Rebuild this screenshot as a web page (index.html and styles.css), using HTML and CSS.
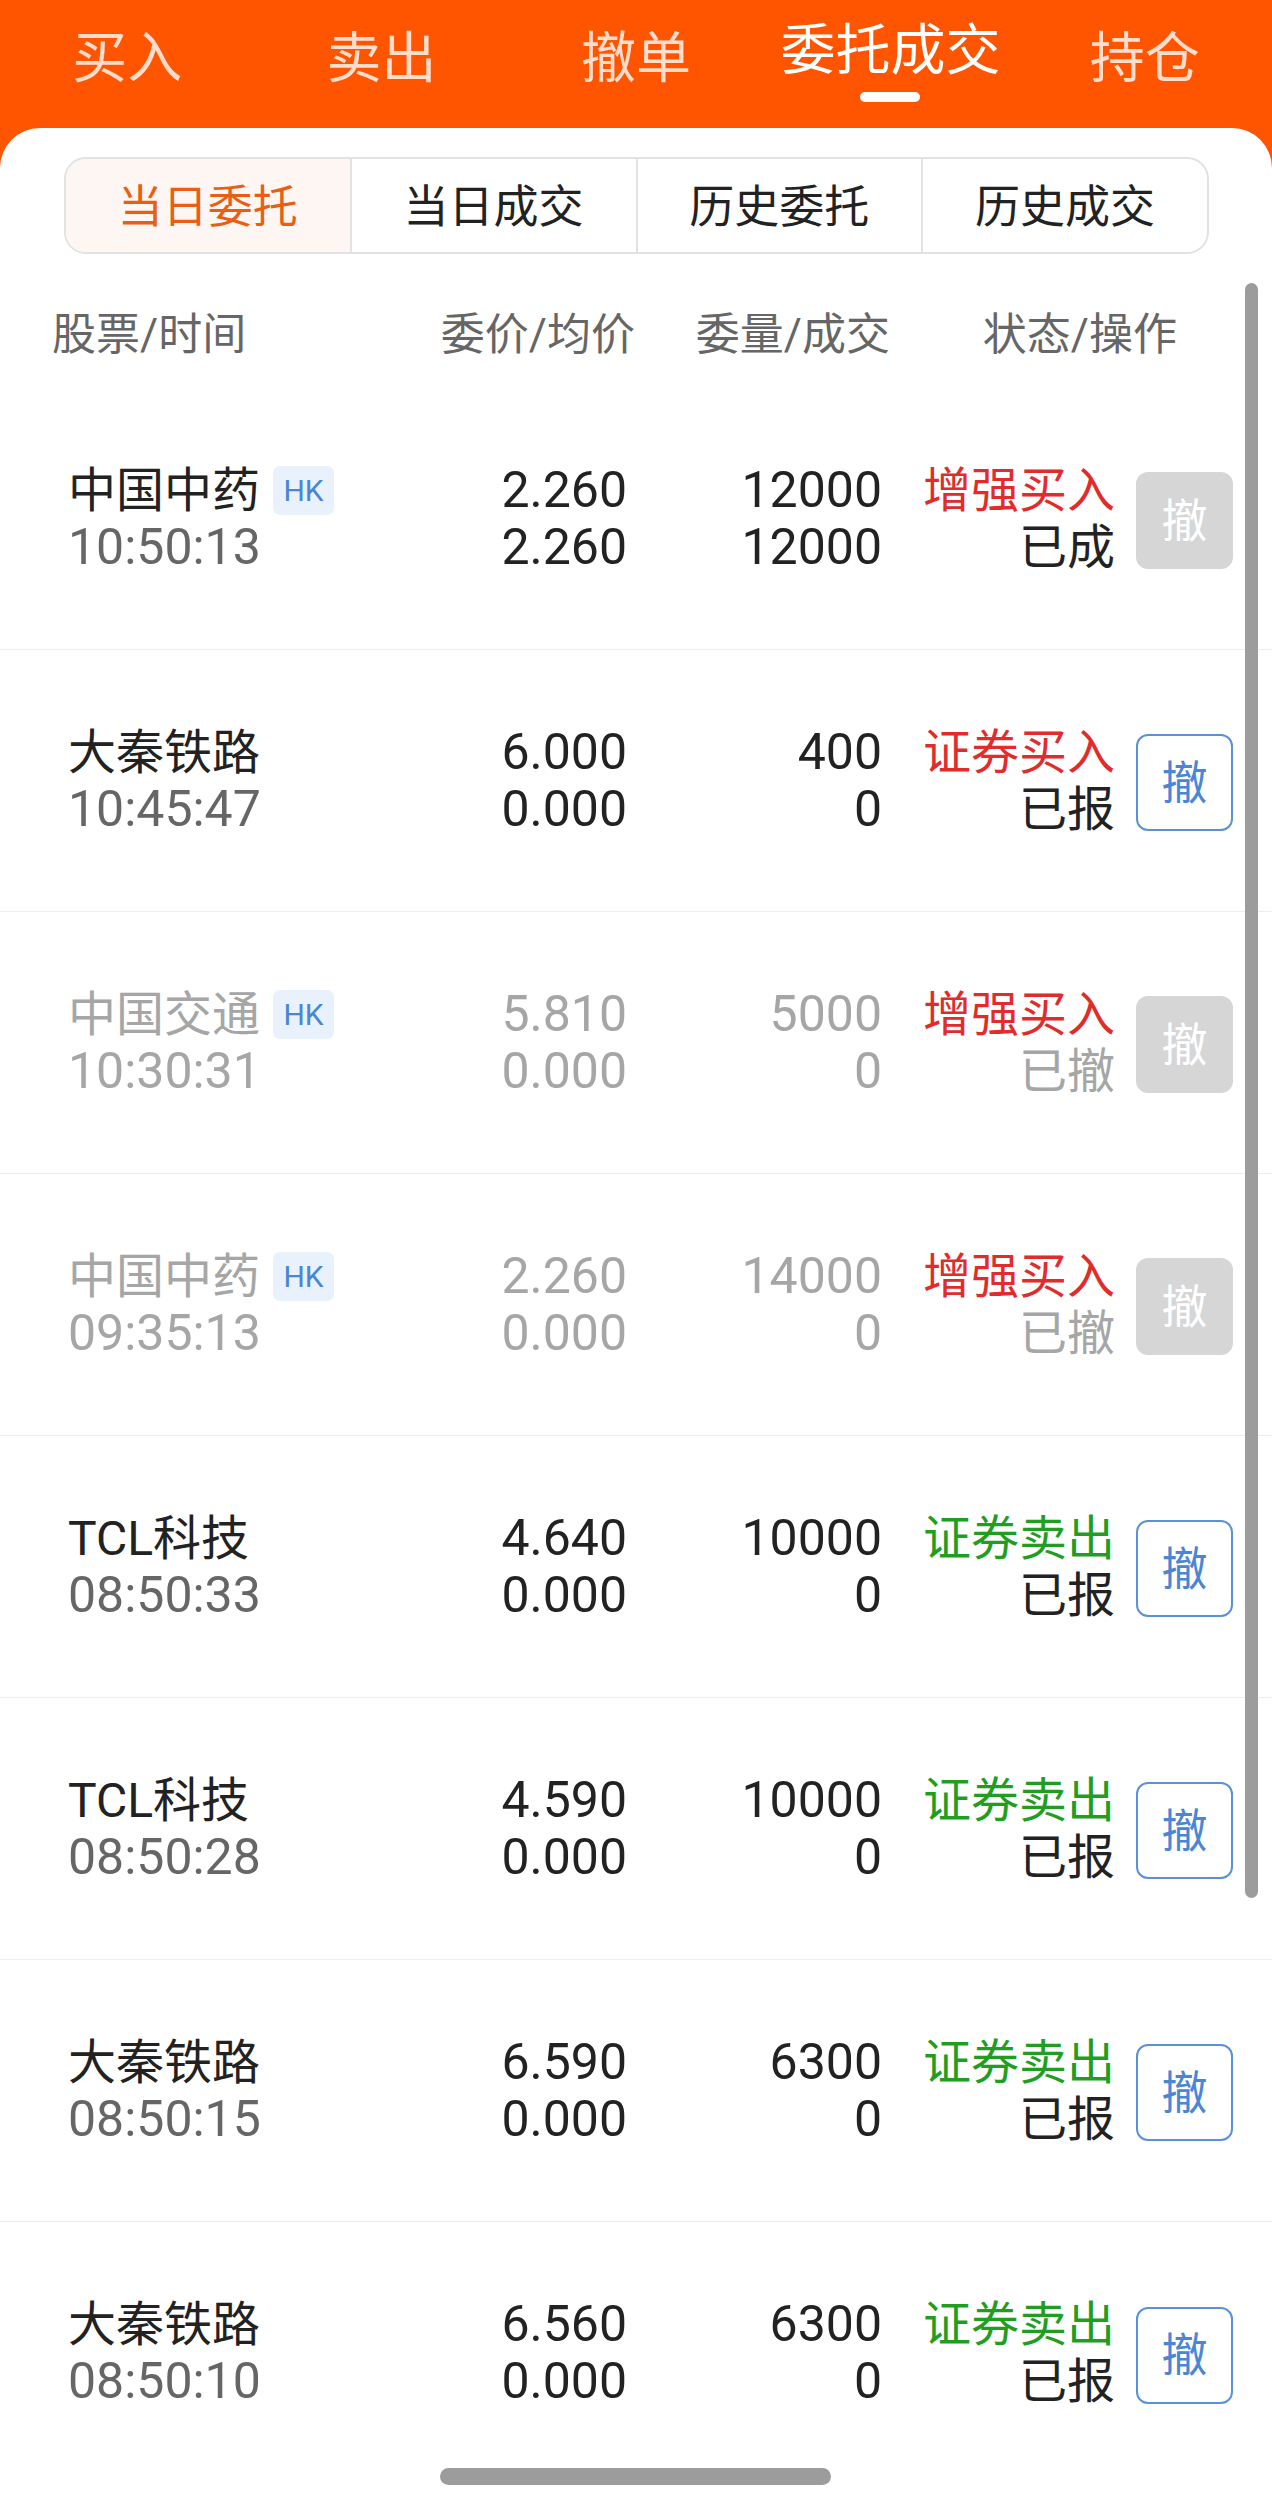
FILE: index.html
```html
<!DOCTYPE html>
<html lang="zh-CN">
<head>
<meta charset="utf-8">
<title>委托成交</title>
<link rel="stylesheet" href="styles.css">
</head>
<body>
<div class="page">
  <nav class="tabs">
    <div class="tab">买入</div>
    <div class="tab">卖出</div>
    <div class="tab">撤单</div>
    <div class="tab active"><span>委托成交</span><i class="indicator"></i></div>
    <div class="tab">持仓</div>
  </nav>
  <main class="card">
    <div class="segments">
      <div class="seg on">当日委托</div>
      <div class="seg">当日成交</div>
      <div class="seg">历史委托</div>
      <div class="seg">历史成交</div>
    </div>
    <div class="thead">
      <div>股票/时间</div>
      <div class="r">委价/均价</div>
      <div class="r">委量/成交</div>
      <div class="r">状态/操作</div>
    </div>

    <div class="row">
      <div class="c-name"><div class="nm">中国中药<span class="hk">HK</span></div><div class="tm">10:50:13</div></div>
      <div class="num"><div>2.260</div><div>2.260</div></div>
      <div class="num"><div>12000</div><div>12000</div></div>
      <div class="st"><div class="buy">增强买入</div><div>已成</div></div>
      <button class="btn off">撤</button>
    </div>

    <div class="row">
      <div class="c-name"><div class="nm">大秦铁路</div><div class="tm">10:45:47</div></div>
      <div class="num"><div>6.000</div><div>0.000</div></div>
      <div class="num"><div>400</div><div>0</div></div>
      <div class="st"><div class="buy">证券买入</div><div>已报</div></div>
      <button class="btn">撤</button>
    </div>

    <div class="row dim">
      <div class="c-name"><div class="nm">中国交通<span class="hk">HK</span></div><div class="tm">10:30:31</div></div>
      <div class="num"><div>5.810</div><div>0.000</div></div>
      <div class="num"><div>5000</div><div>0</div></div>
      <div class="st"><div class="buy">增强买入</div><div>已撤</div></div>
      <button class="btn off">撤</button>
    </div>

    <div class="row dim">
      <div class="c-name"><div class="nm">中国中药<span class="hk">HK</span></div><div class="tm">09:35:13</div></div>
      <div class="num"><div>2.260</div><div>0.000</div></div>
      <div class="num"><div>14000</div><div>0</div></div>
      <div class="st"><div class="buy">增强买入</div><div>已撤</div></div>
      <button class="btn off">撤</button>
    </div>

    <div class="row">
      <div class="c-name"><div class="nm">TCL科技</div><div class="tm">08:50:33</div></div>
      <div class="num"><div>4.640</div><div>0.000</div></div>
      <div class="num"><div>10000</div><div>0</div></div>
      <div class="st"><div class="sell">证券卖出</div><div>已报</div></div>
      <button class="btn">撤</button>
    </div>

    <div class="row">
      <div class="c-name"><div class="nm">TCL科技</div><div class="tm">08:50:28</div></div>
      <div class="num"><div>4.590</div><div>0.000</div></div>
      <div class="num"><div>10000</div><div>0</div></div>
      <div class="st"><div class="sell">证券卖出</div><div>已报</div></div>
      <button class="btn">撤</button>
    </div>

    <div class="row">
      <div class="c-name"><div class="nm">大秦铁路</div><div class="tm">08:50:15</div></div>
      <div class="num"><div>6.590</div><div>0.000</div></div>
      <div class="num"><div>6300</div><div>0</div></div>
      <div class="st"><div class="sell">证券卖出</div><div>已报</div></div>
      <button class="btn">撤</button>
    </div>

    <div class="row">
      <div class="c-name"><div class="nm">大秦铁路</div><div class="tm">08:50:10</div></div>
      <div class="num"><div>6.560</div><div>0.000</div></div>
      <div class="num"><div>6300</div><div>0</div></div>
      <div class="st"><div class="sell">证券卖出</div><div>已报</div></div>
      <button class="btn">撤</button>
    </div>
  </main>
  <div class="scrollbar"></div>
  <div class="home"></div>
</div>
</body>
</html>
```

FILE: styles.css
```css
html, body {
  margin: 0;
  padding: 0;
}
body {
  width: 1272px;
  height: 2506px;
  overflow: hidden;
  background: #ff5500;
  font-family: Roboto, "Noto Sans CJK SC", sans-serif;
  color: #222;
}
.page {
  position: relative;
  width: 1272px;
  height: 2506px;
  overflow: hidden;
}
.tabs {
  display: flex;
  height: 128px;
}
.tab {
  flex: 1;
  display: flex;
  flex-direction: column;
  align-items: center;
  padding-top: 26px;
  font-size: 55px;
  line-height: 64px;
  color: #ffdccb;
  box-sizing: border-box;
}
.tab.active {
  color: #fff;
  padding-top: 18px;
}
.indicator {
  display: block;
  width: 60px;
  height: 10px;
  margin-top: 10px;
  border-radius: 5px;
  background: #fff;
}
.card {
  background: #fff;
  border-radius: 40px 40px 0 0;
  height: 2378px;
  padding-top: 29px;
  box-sizing: border-box;
}
.segments {
  display: flex;
  margin: 0 63px 0 64px;
  height: 97px;
  border: 2px solid #e2e2e2;
  border-radius: 22px;
  box-sizing: border-box;
  overflow: hidden;
}
.seg {
  flex: 1;
  display: flex;
  align-items: center;
  justify-content: center;
  padding-bottom: 5px;
  font-size: 45px;
  color: #222;
  border-left: 2px solid #e2e2e2;
}
.seg:first-child {
  border-left: none;
}
.seg.on {
  background: #fdf6f2;
  color: #ea5e14;
}
.thead {
  display: grid;
  grid-template-columns: 1fr 200px 255px 287px;
  padding: 53px 95px 24px 52px;
  font-size: 44px;
  line-height: 57px;
  color: #666;
}
.r {
  text-align: right;
}
.row {
  display: grid;
  grid-template-columns: 1fr 200px 255px 233px 118px;
  align-items: center;
  height: 262px;
  padding: 0 39px 0 68px;
  border-bottom: 1px solid #ececec;
  box-sizing: border-box;
  line-height: 57px;
}
.row:last-child {
  border-bottom: none;
}
.nm {
  display: flex;
  align-items: center;
  height: 57px;
  font-size: 48px;
  color: #222;
}
.hk {
  display: inline-flex;
  align-items: center;
  justify-content: center;
  width: 61px;
  height: 49px;
  margin-left: 13px;
  border-radius: 7px;
  background: #e8f1fc;
  color: #4a86d4;
  font-size: 30px;
  line-height: 49px;
}
.tm {
  font-size: 50px;
  color: #666;
}
.num {
  text-align: right;
  font-size: 50px;
  color: #222;
}
.st {
  text-align: right;
  font-size: 48px;
  color: #222;
}
.buy {
  color: #e12c2c;
}
.sell {
  color: #1f9e1f;
}
.btn {
  justify-self: end;
  width: 97px;
  height: 97px;
  margin-top: 4px;
  border: 2px solid #5a92d8;
  border-radius: 12px;
  background: #fff;
  color: #4a86d4;
  font-family: Roboto, "Noto Sans CJK SC", sans-serif;
  font-size: 46px;
  line-height: 1;
  padding: 0;
}
.btn.off {
  border-color: #d6d6d6;
  background: #d6d6d6;
  color: #fff;
}
.dim .nm,
.dim .tm,
.dim .num,
.dim .st {
  color: #a6a6a6;
}
.dim .st .buy {
  color: #e12c2c;
}
.scrollbar {
  position: absolute;
  left: 1245px;
  top: 283px;
  width: 13px;
  height: 1615px;
  border-radius: 7px;
  background: #9c9c9c;
}
.home {
  position: absolute;
  left: 440px;
  top: 2468px;
  width: 391px;
  height: 17px;
  border-radius: 9px;
  background: #9c9c9c;
}
```
